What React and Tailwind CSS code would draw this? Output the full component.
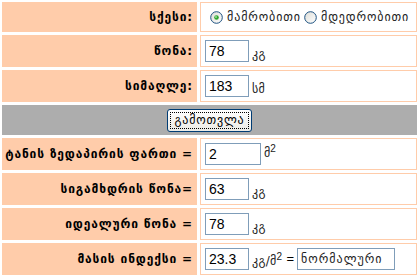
import React from "react";

function Label({ children, h = "h-[32px]" }) {
  return (
    <div
      className={`${h} bg-[#ffccaa] flex items-center justify-end pr-[4px] text-[12px] tracking-[0.85px] font-bold text-black whitespace-nowrap font-['DejaVu_Sans',sans-serif]`}
    >
      {children}
    </div>
  );
}

function Cell({ children, h = "h-[32px]" }) {
  return (
    <div className={`${h} bg-white border border-[#ffccaa] flex items-center pl-[4px] whitespace-nowrap`}>
      {children}
    </div>
  );
}

function Input({ value, w = "w-[44px]" }) {
  return (
    <div className={`${w} h-[22px] border border-[#7f9db9] bg-white flex items-center pl-[3px] text-[14px] text-black font-['Liberation_Sans',Arial,sans-serif]`}>
      {value}
    </div>
  );
}

function Unit({ children }) {
  return (
    <span className="ml-[3px] mt-[6px] text-[12px] tracking-[0.3px] text-[#222] font-['DejaVu_Sans',sans-serif]">
      {children}
    </span>
  );
}

function Radio({ checked, id }) {
  return (
    <svg width="13" height="13" viewBox="0 0 13 13" className="shrink-0">
      <defs>
        <linearGradient id={id} x1="0" y1="0" x2="1" y2="1">
          <stop offset="0" stopColor="#dcdcd7" />
          <stop offset="1" stopColor="#ffffff" />
        </linearGradient>
      </defs>
      <circle cx="6.5" cy="6.5" r="5.8" fill={`url(#${id})`} stroke="#1c5180" strokeWidth="1" />
      {checked && <circle cx="6.5" cy="6.5" r="2.3" fill="#2fa62f" />}
      {checked && <circle cx="6" cy="6" r="0.9" fill="#9ee09e" />}
    </svg>
  );
}

export default function App() {
  return (
    <div className="w-[419px] h-[276px] bg-white overflow-hidden">
      <div className="grid grid-cols-[195px_217px] gap-[3px] p-[2px]">
        <Label h="h-[30px]">სქესი:</Label>
        <Cell h="h-[30px]">
          <div className="flex items-center pl-[5px] text-[12px] tracking-[0.9px] text-[#222] font-['DejaVu_Sans',sans-serif]">
            <Radio checked id="rg1" />
            <span className="ml-[4px]">მამრობითი</span>
            <span className="ml-[3px] flex"><Radio id="rg2" /></span>
            <span className="ml-[4px]">მდედრობითი</span>
          </div>
        </Cell>

        <Label>წონა:</Label>
        <Cell>
          <Input value="78" />
          <Unit>კგ</Unit>
        </Cell>

        <Label>სიმაღლე:</Label>
        <Cell>
          <Input value="183" />
          <Unit>სმ</Unit>
        </Cell>

        <div className="col-span-2 h-[30px] bg-[#adadad] flex items-center justify-center">
          <div className="w-[85px] h-[23px] rounded-[3px] border border-[#003c74] bg-gradient-to-b from-white to-[#ecebe6] flex items-center justify-center p-[2px]">
            <div className="w-full h-full border border-dotted border-black flex items-center justify-center text-[12px] tracking-[0.8px] text-black font-['DejaVu_Sans',sans-serif]">
              გამოთვლა
            </div>
          </div>
        </div>

        <Label>ტანის ზედაპირის ფართი =</Label>
        <Cell>
          <Input value="2" w="w-[56px]" />
          <span className="ml-[3px] mb-[2px] text-[12px] text-[#222] font-['DejaVu_Sans',sans-serif]">
            მ<sup className="text-[10px] font-['Liberation_Sans',Arial,sans-serif]">2</sup>
          </span>
        </Cell>

        <Label>სიგამხდრის წონა=</Label>
        <Cell>
          <Input value="63" />
          <Unit>კგ</Unit>
        </Cell>

        <Label>იდეალური წონა =</Label>
        <Cell>
          <Input value="78" />
          <Unit>კგ</Unit>
        </Cell>

        <Label>მასის ინდექსი =</Label>
        <Cell>
          <Input value="23.3" />
          <span className="ml-[3px] mt-[4px] text-[12px] tracking-[0.3px] text-[#222] font-['DejaVu_Sans',sans-serif]">
            კგ/მ<sup className="text-[10px] font-['Liberation_Sans',Arial,sans-serif]">2</sup>
          </span>
          <span className="ml-[4px] text-[13px] text-black font-['Liberation_Sans',Arial,sans-serif]">=</span>
          <div className="ml-[3px] w-[98px] h-[22px] border border-[#7f9db9] bg-white flex items-center pl-[3px] text-[12px] tracking-[1px] text-[#222] font-['DejaVu_Sans',sans-serif]">
            ნორმალური
          </div>
        </Cell>
      </div>
    </div>
  );
}
